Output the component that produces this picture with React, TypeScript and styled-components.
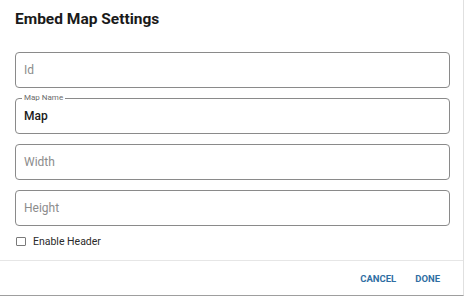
import React from "react";
import styled, { createGlobalStyle } from "styled-components";

const GlobalStyle = createGlobalStyle`
  html, body {
    margin: 0;
    padding: 0;
    background: #ffffff;
  }
  * {
    box-sizing: border-box;
  }
`;

// #region styles

const Dialog = styled.div`
  width: 464px;
  height: 296px;
  background: #ffffff;
  border-right: 1px solid #e0e0e0;
  border-bottom: 1px solid #9e9e9e;
  font-family: Roboto, "Liberation Sans", sans-serif;
  display: flex;
  flex-direction: column;
`;

const Title = styled.h2`
  margin: 0;
  padding: 9px 15px 0;
  font-size: 15.5px;
  font-weight: 700;
  color: #1a1a1a;
  line-height: 20px;
`;

const Content = styled.div`
  padding: 23px 15px 0;
  display: flex;
  flex-direction: column;
  gap: 10px;
  height: 231px;
`;

const Field = styled.div`
  position: relative;
  height: 36px;
  width: 435px;
  flex-shrink: 0;
  display: flex;
  align-items: center;
  padding: 0 9px;
`;

const Outline = styled.fieldset`
  position: absolute;
  inset: -5px 0 0 0;
  margin: 0;
  padding: 0 6px;
  border: 1px solid #8a8a8a;
  border-radius: 4px;
  pointer-events: none;
`;

const Legend = styled.legend<{ $shown: boolean }>`
  height: 10px;
  padding: ${(p) => (p.$shown ? "0 2px" : "0")};
  max-width: ${(p) => (p.$shown ? "100%" : "0.01px")};
  visibility: ${(p) => (p.$shown ? "visible" : "hidden")};
  overflow: hidden;
  white-space: nowrap;
  font-size: 8px;
  line-height: 10px;
  color: #6b6b6b;
`;

const Value = styled.span<{ $placeholder: boolean }>`
  font-size: 12px;
  color: ${(p) => (p.$placeholder ? "#8c8c8c" : "#1a1a1a")};
  font-weight: ${(p) => (p.$placeholder ? 400 : 500)};
`;

const CheckRow = styled.label`
  display: flex;
  align-items: center;
  gap: 7px;
  margin-top: -1px;
  font-size: 10.5px;
  color: #2a2a2a;
`;

const Box = styled.span`
  width: 10px;
  height: 9px;
  border: 1px solid #7a7a7a;
  border-radius: 1px;
  margin-left: 1px;
`;

const Footer = styled.div`
  border-top: 1px solid #e6e6e6;
  flex: 1;
  display: flex;
  justify-content: flex-end;
  align-items: center;
  gap: 19px;
  padding: 0 23px 0 0;
`;

const Action = styled.button`
  background: none;
  border: none;
  padding: 0;
  font-family: Roboto, "Liberation Sans", sans-serif;
  font-size: 9.5px;
  font-weight: 700;
  letter-spacing: 0;
  color: #2f6ea3;
  text-transform: uppercase;
  cursor: pointer;
`;

// #endregion

const fields = [
  { label: "Id", value: "" },
  { label: "Map Name", value: "Map" },
  { label: "Width", value: "" },
  { label: "Height", value: "" },
];

export default function App() {
  return (
    <>
      <GlobalStyle />
      <Dialog>
        <Title>{"Embed Map Settings"}</Title>
        <Content>
          {fields.map((f) => (
            <Field key={f.label}>
              <Outline>
                <Legend $shown={!!f.value}>{f.label}</Legend>
              </Outline>
              <Value $placeholder={!f.value}>{f.value || f.label}</Value>
            </Field>
          ))}
          <CheckRow>
            <Box />
            {"Enable Header"}
          </CheckRow>
        </Content>
        <Footer>
          <Action>{"Cancel"}</Action>
          <Action>{"Done"}</Action>
        </Footer>
      </Dialog>
    </>
  );
}
